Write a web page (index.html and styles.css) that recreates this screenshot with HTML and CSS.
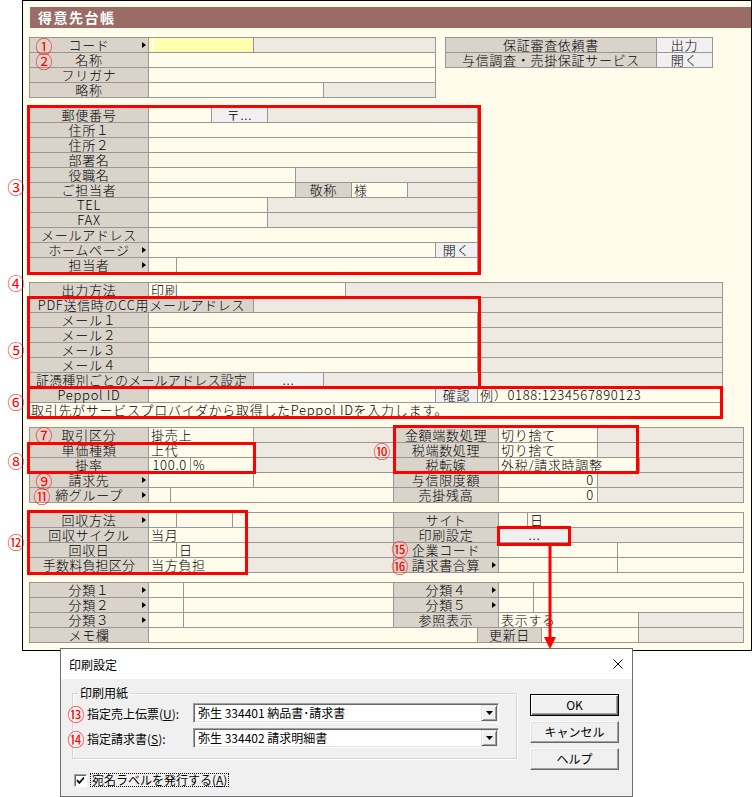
FILE: index.html
```html
<!DOCTYPE html>
<html lang="ja">
<head>
<meta charset="utf-8">
<title>得意先台帳</title>
<link rel="stylesheet" href="styles.css">
</head>
<body>
<div class="page">
  <div class="win">
    <div class="title">得意先台帳</div>

    <div class="sec">
      <div class="grid ga-l">
        <div class="row"><div class="c l arr w119">コード</div><div class="c y w105"></div><div class="c g"></div></div>
        <div class="row"><div class="c l w119">名称</div><div class="c v"></div></div>
        <div class="row"><div class="c l w119">フリガナ</div><div class="c v"></div></div>
        <div class="row"><div class="c l w119">略称</div><div class="c v w175"></div><div class="c g"></div></div>
      </div>
      <div class="grid ga-r">
        <div class="row"><div class="c l w211">保証審査依頼書</div><div class="c b">出力</div></div>
        <div class="row"><div class="c l w211">与信調査・売掛保証サービス</div><div class="c b">開く</div></div>
      </div>
    </div>

    <div class="sec">
      <div class="grid gb">
        <div class="row"><div class="c l w119">郵便番号</div><div class="c v w63"></div><div class="c b w56">〒...</div><div class="c g"></div></div>
        <div class="row"><div class="c l w119">住所１</div><div class="c v"></div></div>
        <div class="row"><div class="c l w119">住所２</div><div class="c v"></div></div>
        <div class="row"><div class="c l w119">部署名</div><div class="c v"></div></div>
        <div class="row"><div class="c l w119">役職名</div><div class="c v w147"></div><div class="c g"></div></div>
        <div class="row"><div class="c l w119">ご担当者</div><div class="c v w147"></div><div class="c l w56">敬称</div><div class="c v w56">様</div><div class="c g"></div></div>
        <div class="row"><div class="c l w119">TEL</div><div class="c v w119"></div><div class="c g"></div></div>
        <div class="row"><div class="c l w119">FAX</div><div class="c v w119"></div><div class="c g"></div></div>
        <div class="row"><div class="c l w119">メールアドレス</div><div class="c v"></div></div>
        <div class="row"><div class="c l arr w119">ホームページ</div><div class="c v w287"></div><div class="c b">開く</div></div>
        <div class="row"><div class="c l arr w119">担当者</div><div class="c v w28"></div><div class="c v"></div></div>
      </div>
    </div>

    <div class="sec">
      <div class="grid gc">
        <div class="row"><div class="c l w119">出力方法</div><div class="c v w197">印刷</div><div class="c g"></div></div>
        <div class="row"><div class="c l w224">PDF送信時のCC用メールアドレス</div><div class="c g"></div></div>
        <div class="row"><div class="c l w119">メール１</div><div class="c v w329"></div><div class="c g"></div></div>
        <div class="row"><div class="c l w119">メール２</div><div class="c v w329"></div><div class="c g"></div></div>
        <div class="row"><div class="c l w119">メール３</div><div class="c v w329"></div><div class="c g"></div></div>
        <div class="row"><div class="c l w119">メール４</div><div class="c v w329"></div><div class="c g"></div></div>
        <div class="row"><div class="c l w224 tight">証憑種別ごとのメールアドレス設定</div><div class="c b w70">...</div><div class="c g"></div></div>
        <div class="row"><div class="c l w119">Peppol ID</div><div class="c v w287"></div><div class="c b w42">確認</div><div class="c v">例）0188:1234567890123</div></div>
        <div class="row"><div class="c v desc">取引先がサービスプロバイダから取得したPeppol IDを入力します。</div></div>
      </div>
    </div>

    <div class="sec">
      <div class="grid gd">
        <div class="row"><div class="c l w119">取引区分</div><div class="c v w105">掛売上</div><div class="c g w140"></div><div class="c l w105">金額端数処理</div><div class="c v w99">切り捨て</div><div class="c g"></div></div>
        <div class="row"><div class="c l w119">単価種類</div><div class="c v w105">上代</div><div class="c g w140"></div><div class="c l w105">税端数処理</div><div class="c v w99">切り捨て</div><div class="c g"></div></div>
        <div class="row"><div class="c l w119">掛率</div><div class="c v w42 r">100.0</div><div class="c v w63">%</div><div class="c g w140"></div><div class="c l w105">税転嫁</div><div class="c v w141">外税/請求時調整</div><div class="c g"></div></div>
        <div class="row"><div class="c l arr w119">請求先</div><div class="c v w105"></div><div class="c v w140"></div><div class="c l w105">与信限度額</div><div class="c v w99 r">0</div><div class="c g"></div></div>
        <div class="row"><div class="c l arr w119">締グループ</div><div class="c v w22"></div><div class="c v w223"></div><div class="c l w105">売掛残高</div><div class="c v w99 r">0</div><div class="c g"></div></div>
      </div>
    </div>

    <div class="sec">
      <div class="grid gd">
        <div class="row"><div class="c l arr w119">回収方法</div><div class="c v w28"></div><div class="c v w56"></div><div class="c v w161"></div><div class="c l w105">サイト</div><div class="c v w29"></div><div class="c v">日</div></div>
        <div class="row"><div class="c l w119">回収サイクル</div><div class="c v w98">当月</div><div class="c g w147"></div><div class="c l w105">印刷設定</div><div class="c b w72">...</div><div class="c g"></div></div>
        <div class="row"><div class="c l w119">回収日</div><div class="c v w28"></div><div class="c v w70">日</div><div class="c g w147"></div><div class="c l w105">企業コード</div><div class="c v w119"></div><div class="c v"></div></div>
        <div class="row"><div class="c l w119 tight">手数料負担区分</div><div class="c v w98">当方負担</div><div class="c g w147"></div><div class="c l arr w105">請求書合算</div><div class="c v w119"></div><div class="c v"></div></div>
      </div>
    </div>

    <div class="sec">
      <div class="grid gd">
        <div class="row"><div class="c l arr w119">分類１</div><div class="c v w35"></div><div class="c v w210"></div><div class="c l arr w105">分類４</div><div class="c v w35"></div><div class="c v"></div></div>
        <div class="row"><div class="c l arr w119">分類２</div><div class="c v w35"></div><div class="c v w210"></div><div class="c l arr w105">分類５</div><div class="c v w35"></div><div class="c v"></div></div>
        <div class="row"><div class="c l arr w119">分類３</div><div class="c v w35"></div><div class="c v w210"></div><div class="c l w105">参照表示</div><div class="c v w140">表示する</div><div class="c g"></div></div>
        <div class="row"><div class="c l w119">メモ欄</div><div class="c v w329"></div><div class="c l w64">更新日</div><div class="c v w97"></div><div class="c g"></div></div>
      </div>
    </div>
  </div>

  <div class="dlg">
    <div class="dlg-title">
      <span>印刷設定</span>
      <svg class="dlg-x" width="10" height="10" viewBox="0 0 10 10"><path d="M0.5 0.5 L9.5 9.5 M9.5 0.5 L0.5 9.5" stroke="#000" stroke-width="1" fill="none"/></svg>
    </div>
    <div class="dlg-body">
      <div class="dlg-main">
        <fieldset class="grp">
          <legend>印刷用紙</legend>
          <div class="frow">
            <span class="flabel">指定売上伝票(<u>U</u>):</span>
            <div class="combo"><span class="combo-text">弥生 334401 納品書･請求書</span><span class="combo-btn"><svg width="7" height="4" viewBox="0 0 7 4"><polygon points="0,0 7,0 3.5,4" fill="#000"/></svg></span></div>
          </div>
          <div class="frow frow2">
            <span class="flabel">指定請求書(<u>S</u>):</span>
            <div class="combo"><span class="combo-text">弥生 334402 請求明細書</span><span class="combo-btn"><svg width="7" height="4" viewBox="0 0 7 4"><polygon points="0,0 7,0 3.5,4" fill="#000"/></svg></span></div>
          </div>
        </fieldset>
        <div class="chk-row">
          <span class="chk"><svg width="9" height="9" viewBox="0 0 9 9"><path d="M1 4.2 L3.4 6.8 L8 1.5" stroke="#000" stroke-width="1.8" fill="none"/></svg></span>
          <span class="chk-label">宛名ラベルを発行する(<u>A</u>)</span>
        </div>
      </div>
      <div class="dlg-btns">
        <div class="btn def">OK</div>
        <div class="btn">キャンセル</div>
        <div class="btn">ヘルプ</div>
      </div>
    </div>
  </div>

  <div class="rb rb3"></div>
  <div class="rb rb5"></div>
  <div class="rb rb6"></div>
  <div class="rb rb8"></div>
  <div class="rb rb10"></div>
  <div class="rb rb12"></div>
  <div class="rb rbp"></div>

  <span class="num n1">①</span>
  <span class="num n2">②</span>
  <span class="num n3">③</span>
  <span class="num n4">④</span>
  <span class="num n5">⑤</span>
  <span class="num n6">⑥</span>
  <span class="num n7">⑦</span>
  <span class="num n8">⑧</span>
  <span class="num n9">⑨</span>
  <span class="num n10">⑩</span>
  <span class="num n11">⑪</span>
  <span class="num n12">⑫</span>
  <span class="num n13">⑬</span>
  <span class="num n14">⑭</span>
  <span class="num n15">⑮</span>
  <span class="num n16">⑯</span>

  <svg class="arrow" width="14" height="106" viewBox="0 0 14 106"><rect x="5.5" y="0" width="3" height="94" fill="#f00"/><polygon points="1,92 13,92 7,104" fill="#f00"/></svg>
</div>
</body>
</html>
```

FILE: styles.css
```css
* { box-sizing: border-box; }
html, body { margin: 0; padding: 0; background: #fff; }
body {
  font-family: "Noto Sans CJK JP", "Noto Sans", sans-serif;
  font-size: 13px;
  color: #000;
}
.page { position: relative; width: 752px; height: 797px; overflow: hidden; }

/* main window */
.win {
  margin-left: 22px;
  width: 730px;
  height: 651px;
  border: 1px solid #000;
  background: #FFFCEC;
}
.title {
  margin: 6px 0 0 7px;
  height: 21px;
  background: #9B6B65;
  color: #fff;
  font-size: 14px;
  font-weight: bold;
  line-height: 21px;
  padding-left: 8px;
  letter-spacing: 1.5px;
}
.sec {
  margin: 9px 0 0 6px;
  display: flex;
  align-items: flex-start;
  gap: 9px;
}
.grid {
  border-top: 1px solid #979797;
  border-left: 1px solid #979797;
}
.ga-l { width: 407px; }
.ga-r { width: 268px; }
.gb { width: 449px; }
.gc { width: 694px; }
.gd { width: 715px; }

.row { display: flex; height: 15px; }
.c {
  flex: none;
  height: 15px;
  border-right: 1px solid #979797;
  border-bottom: 1px solid #979797;
  line-height: 14px;
  white-space: nowrap;
  padding: 0 2px;
  letter-spacing: 0.7px;
  font-weight: 300;
}
.row > .c:last-child { flex: 1 1 0; min-width: 0; }
.l { background: #D9D3CA; text-align: center; position: relative; }
.v { background: #FFFCEC; }
.g { background: #EEEAE1; }
.y { background: #FFFFAF; box-shadow: inset 3px 0 0 #FFFFAF, inset 5px 0 0 #fff; }
.b { background: #F0F0F0; text-align: center; }
.r { text-align: right; padding-right: 3px; }
.tight { padding: 0; letter-spacing: 0.2px; }
.desc { padding-left: 1px; }
.arr::after {
  content: "";
  position: absolute;
  right: 2px;
  top: 4px;
  border-left: 4px solid #000;
  border-top: 3.5px solid transparent;
  border-bottom: 3.5px solid transparent;
}

.w22 { width: 22px; } .w28 { width: 28px; } .w29 { width: 29px; }
.w35 { width: 35px; } .w42 { width: 42px; } .w56 { width: 56px; }
.w63 { width: 63px; } .w64 { width: 64px; } .w70 { width: 70px; }
.w72 { width: 72px; } .w97 { width: 97px; } .w98 { width: 98px; }
.w99 { width: 99px; } .w105 { width: 105px; } .w119 { width: 119px; }
.w140 { width: 140px; } .w141 { width: 141px; } .w147 { width: 147px; }
.w161 { width: 161px; } .w175 { width: 175px; } .w197 { width: 197px; }
.w210 { width: 210px; } .w211 { width: 211px; } .w223 { width: 223px; }
.w224 { width: 224px; } .w287 { width: 287px; } .w329 { width: 329px; }

/* dialog */
.dlg {
  position: absolute;
  left: 60px;
  top: 648px;
  width: 573px;
  height: 149px;
  border: 1px solid #6f6f6f;
  background: #F0F0F0;
  font-size: 12px;
}
.dlg-title {
  height: 30px;
  background: #fff;
  display: flex;
  align-items: center;
  justify-content: space-between;
  padding: 0 9px 0 8px;
}
.dlg-body {
  display: flex;
  align-items: flex-start;
  padding: 7px 0 0 11px;
}
.grp {
  width: 445px;
  margin: 0;
  padding: 3px 0 10px 14px;
  border: 1px solid #D5D5D5;
  box-shadow: inset 1px 1px 0 #fff, 1px 1px 0 #fff;
}
.grp legend {
  padding: 0 2px;
  margin-left: -9px;
  line-height: 14px;
}
.frow { display: flex; align-items: center; height: 20px; }
.frow2 { margin-top: 5px; }
.flabel { width: 106px; flex: none; }
.combo {
  width: 306px;
  height: 20px;
  display: flex;
  background: #fff;
  border: 1px solid;
  border-color: #A0A0A0 #fff #fff #A0A0A0;
  box-shadow: inset 1px 1px 0 #696969, inset -1px -1px 0 #E3E3E3;
  padding: 1px;
}
.combo-text { flex: 1; line-height: 16px; padding-left: 3px; }
.combo-btn {
  width: 16px;
  height: 16px;
  background: #F0F0F0;
  border: 1px solid;
  border-color: #E3E3E3 #696969 #696969 #E3E3E3;
  box-shadow: inset 1px 1px 0 #fff, inset -1px -1px 0 #A0A0A0;
  display: flex;
  align-items: center;
  justify-content: center;
}
.chk-row { display: flex; align-items: center; margin: 14px 0 0 2px; gap: 3px; }
.chk {
  width: 13px;
  height: 13px;
  background: #fff;
  border: 1px solid;
  border-color: #A0A0A0 #fff #fff #A0A0A0;
  box-shadow: inset 1px 1px 0 #696969;
  display: flex;
  align-items: center;
  justify-content: center;
}
.chk-label { border: 1px dotted #000; line-height: 12px; padding: 0 1px; }
.dlg-btns {
  margin: 8px 0 0 13px;
  width: 89px;
  display: flex;
  flex-direction: column;
  gap: 5px;
}
.btn {
  height: 22px;
  line-height: 20px;
  text-align: center;
  background: #F0F0F0;
  border: 1px solid;
  border-color: #fff #696969 #696969 #fff;
  box-shadow: inset -1px -1px 0 #A0A0A0, inset 1px 1px 0 #E3E3E3;
}
.btn.def {
  border: 1px solid #000;
  box-shadow: inset 1px 1px 0 #fff, inset -1px -1px 0 #696969, inset -2px -2px 0 #A0A0A0;
}

/* annotations */
.rb { position: absolute; border: 3px solid #f00; }
.rb3 { left: 27px; top: 105px; width: 454px; height: 170px; }
.rb5 { left: 27px; top: 296px; width: 454px; height: 93px; }
.rb6 { left: 27px; top: 386px; width: 696px; height: 33px; }
.rb8 { left: 27px; top: 442px; width: 229px; height: 32px; }
.rb10 { left: 393px; top: 425px; width: 246px; height: 49px; }
.rb12 { left: 27px; top: 510px; width: 221px; height: 65px; }
.rbp { left: 497px; top: 526px; width: 74px; height: 20px; }

.num {
  position: absolute;
  width: 18px;
  height: 15px;
  color: #f00;
  font-size: 17px;
  line-height: 15px;
  text-align: center;
}
.n1 { left: 35px; top: 38px; }
.n2 { left: 35px; top: 53px; }
.n3 { left: 7px; top: 179px; }
.n4 { left: 7px; top: 275px; }
.n5 { left: 7px; top: 342px; }
.n6 { left: 7px; top: 394px; }
.n7 { left: 35px; top: 427px; }
.n8 { left: 7px; top: 453px; }
.n9 { left: 35px; top: 473px; }
.n10 { left: 373px; top: 443px; }
.n11 { left: 33px; top: 488px; }
.n12 { left: 7px; top: 534px; }
.n13 { left: 67px; top: 706px; }
.n14 { left: 67px; top: 731px; }
.n15 { left: 391px; top: 541px; }
.n16 { left: 391px; top: 558px; }

.arrow { position: absolute; left: 543px; top: 545px; }
```
